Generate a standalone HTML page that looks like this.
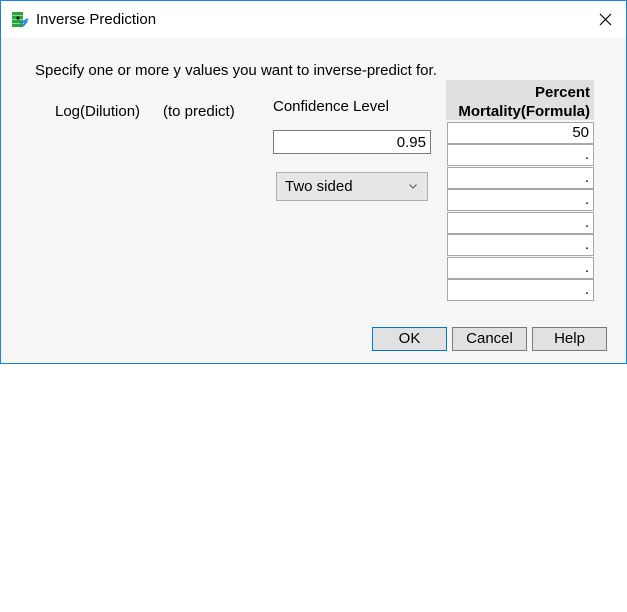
<!DOCTYPE html>
<html><head><style>
body{margin:0;width:627px;height:612px;background:#fff;font-family:"Liberation Sans",sans-serif;font-size:15px;color:#000;position:relative;overflow:hidden}
.win{position:absolute;left:0;top:0;width:625px;height:362px;border:1px solid #1883d7;background:#f6f6f6}
.title{position:absolute;left:0;top:0;width:625px;height:37px;background:#fff}
.a{position:absolute;white-space:nowrap}
.cell{position:absolute;left:446px;width:145px;height:20px;border:1px solid #a8a8a8;background:#fff;text-align:right;box-sizing:content-box}
.cell span{position:absolute;right:4px;top:1px}
.btn{position:absolute;top:326px;width:73px;height:22px;border:1px solid #adadad;background:#e1e1e1;text-align:center;line-height:22px;font-size:15px}
</style></head><body>
<div class="win">
<div class="title">
<svg class="a" style="left:10px;top:10px" width="20" height="18" viewBox="0 0 20 18">
<rect x="1" y="1" width="11" height="15" fill="#2aa53a"/><rect x="1" y="4" width="11" height="1" fill="#8fd99a"/><rect x="1" y="8" width="11" height="1" fill="#8fd99a"/><rect x="1" y="12" width="11" height="1" fill="#8fd99a"/>
<circle cx="7" cy="7" r="1.6" fill="#111"/>
<path d="M9 13 L17 8 M12 15 L16 10" stroke="#1d8fe0" stroke-width="2"/>
</svg>
<div class="a" style="left:35px;top:10px;font-size:15px">Inverse Prediction</div>
<svg class="a" style="left:598px;top:12px" width="13" height="13"><path d="M1 1L12 12M12 1L1 12" stroke="#000" stroke-width="1.2"/></svg>
</div>
<div class="a" style="left:34px;top:61px">Specify one or more y values you want to inverse-predict for.</div>
<div class="a" style="left:54px;top:102px">Log(Dilution)</div>
<div class="a" style="left:162px;top:102px">(to predict)</div>
<div class="a" style="left:272px;top:97px">Confidence Level</div>
<div class="a" style="left:272px;top:129px;width:156px;height:22px;border:1px solid #7a7a7a;background:#fff"><span class="a" style="right:4px;top:3px">0.95</span></div>
<div class="a" style="left:275px;top:171px;width:150px;height:27px;border:1px solid #adadad;background:#e6e6e6"><span class="a" style="left:8px;top:5px;font-size:15px">Two sided</span><svg class="a" style="right:10px;top:11px" width="8" height="5"><path d="M0.5 0.5L4 4L7.5 0.5" stroke="#555" fill="none"/></svg></div>
<div class="a" style="left:445px;top:79px;width:148px;height:40px;background:#e0e0e0;font-weight:bold;text-align:right"><div style="padding:3px 4px 0 0;line-height:19px">Percent<br>Mortality(Formula)</div></div>
<div class="cell" style="top:121px"><span>50</span></div>
<div class="cell" style="top:143px"><span>.</span></div>
<div class="cell" style="top:166px"><span>.</span></div>
<div class="cell" style="top:188px"><span>.</span></div>
<div class="cell" style="top:211px"><span>.</span></div>
<div class="cell" style="top:233px"><span>.</span></div>
<div class="cell" style="top:256px"><span>.</span></div>
<div class="cell" style="top:278px"><span>.</span></div>
<div class="btn" style="left:371px;border-color:#0078d7">OK</div>
<div class="btn" style="left:451px;border-color:#7a7a7a">Cancel</div>
<div class="btn" style="left:531px;border-color:#7a7a7a">Help</div>
</div>
</body></html>
